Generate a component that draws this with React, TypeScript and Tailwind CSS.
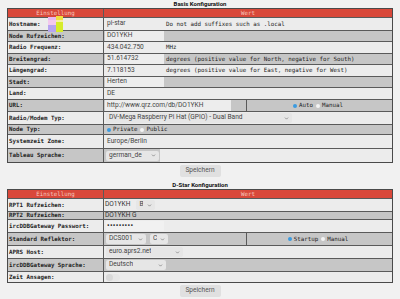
import { ChevronDown } from "lucide-react";

type Tone = "light" | "dark";

const mono = "font-['DejaVu_Sans_Mono',monospace]";
const sans = "font-['Roboto','Noto_Sans',sans-serif]";

function Row({
  label,
  tone,
  h,
  children,
}: {
  label: string;
  tone: Tone;
  h: string;
  children?: React.ReactNode;
}) {
  const bg = tone === "light" ? "bg-[#ececec]" : "bg-[#c6c6c6]";
  return (
    <div className={`flex border-t border-[#5a5a5a] ${bg} ${h}`}>
      <div className="flex w-[96px] shrink-0 items-center border-r border-[#5a5a5a] pl-[1px]">
        <span className={`${mono} text-[5.8px] font-bold text-[#1e1e1e]`}>{label}</span>
      </div>
      <div className="flex min-w-0 flex-1 items-center">{children}</div>
    </div>
  );
}

function Field({ value, w = "w-[59px]", dark }: { value: string; w?: string; dark?: boolean }) {
  return (
    <div
      className={`ml-[1px] flex h-full items-center pl-[2px] ${w} ${
        dark ? "bg-[#ededed]" : "bg-[#ececec]"
      } ${sans} text-[6.6px] text-[#444]`}
    >
      {value}
    </div>
  );
}

function Select({ value, w, ml = "ml-[2px]" }: { value: string; w: string; ml?: string }) {
  return (
    <div
      className={`${ml} flex h-[10px] items-center justify-between rounded-[2px] bg-[#e6e6e6] pl-[3px] pr-[3px] ${w} ${sans} text-[6.6px] text-[#444]`}
    >
      <span className="truncate">{value}</span>
      <ChevronDown size={5} strokeWidth={3} className="shrink-0 text-[#666]" />
    </div>
  );
}

function Note({ text }: { text: string }) {
  return (
    <span className={`ml-[2px] whitespace-nowrap ${mono} text-[5.8px] text-[#222]`}>{text}</span>
  );
}

function Radio({ label, on }: { label: string; on?: boolean }) {
  return (
    <span className="mr-[3px] inline-flex items-center">
      <span
        className={`mr-[2px] inline-block h-[4px] w-[4px] rounded-full ${
          on ? "bg-[#3b9be0]" : "bg-[#f4f4f4]"
        }`}
      />
      <span className={`${mono} text-[5.8px] text-[#222]`}>{label}</span>
    </span>
  );
}

function Header() {
  return (
    <div className={`flex h-[8px] bg-[#d9483a] ${mono} text-[5.8px] text-[#f6c9bf]`}>
      <div className="flex w-[96px] shrink-0 items-center justify-center border-r border-[#5a5a5a]">
        Einstellung
      </div>
      <div className="flex flex-1 items-center justify-center">Wert</div>
    </div>
  );
}

function Title({ text }: { text: string }) {
  return (
    <div className={`h-[8px] text-center ${sans} text-[6px] font-bold leading-[8px] text-[#111]`}>
      {text}
    </div>
  );
}

function SaveButton() {
  return (
    <div className="flex justify-center py-[2px]">
      <div
        className={`flex h-[12px] w-[41px] items-center justify-center rounded-[2px] bg-[#e0e0e0] ${sans} text-[6.6px] text-[#555]`}
      >
        Speichern
      </div>
    </div>
  );
}

export default function App() {
  return (
    <div className="relative h-[299px] w-[400px] overflow-hidden bg-[#f1f1f1] px-[7px]">
      <Title text="Basis Konfiguration" />
      <div className="border border-[#4a4a4a]">
        <Header />
        <Row label="Hostname:" tone="light" h="h-[13px]">
          <Field value="pi-star" />
          <Note text="Do not add suffixes such as .local" />
        </Row>
        <Row label="Node Rufzeichen:" tone="dark" h="h-[11px]">
          <Field value="DO1YKH" dark />
        </Row>
        <Row label="Radio Frequenz:" tone="light" h="h-[12px]">
          <Field value="434.042.750" />
          <Note text="MHz" />
        </Row>
        <Row label="Breitengrad:" tone="dark" h="h-[11px]">
          <Field value="51.614732" dark />
          <Note text="degrees (positive value for North, negative for South)" />
        </Row>
        <Row label="Längengrad:" tone="light" h="h-[12px]">
          <Field value="7.118153" />
          <Note text="degrees (positive value for East, negative for West)" />
        </Row>
        <Row label="Stadt:" tone="dark" h="h-[11px]">
          <Field value="Herten" dark />
        </Row>
        <Row label="Land:" tone="light" h="h-[12px]">
          <Field value="DE" />
        </Row>
        <Row label="URL:" tone="dark" h="h-[12px]">
          <div className="flex h-full w-[143px] shrink-0 items-center border-r border-[#5a5a5a]">
            <Field value="http://www.qrz.com/db/DO1YKH" w="w-[126px]" dark />
          </div>
          <div className="flex flex-1 items-center justify-center">
            <Radio label="Auto" on />
            <Radio label="Manual" />
          </div>
        </Row>
        <Row label="Radio/Modem Typ:" tone="light" h="h-[13px]">
          <Select value="DV-Mega Raspberry Pi Hat (GPIO) - Dual Band" w="w-[186px]" />
        </Row>
        <Row label="Node Typ:" tone="dark" h="h-[10px]">
          <span className="ml-[3px]" />
          <Radio label="Private" on />
          <Radio label="Public" />
        </Row>
        <Row label="Systemzeit Zone:" tone="light" h="h-[14px]">
          <div className={`ml-[3px] ${sans} text-[6.6px] text-[#444]`}>Europe/Berlin</div>
        </Row>
        <Row label="Tableau Sprache:" tone="dark" h="h-[14px]">
          <Select value="german_de" w="w-[53px]" />
          <div className="ml-[1px] h-full flex-1 bg-[#ececec]" />
        </Row>
      </div>
      <SaveButton />
      <div className="h-[2px]" />
      <Title text="D-Star Konfiguration" />
      <div className="border border-[#4a4a4a]">
        <Header />
        <Row label="RPT1 Rufzeichen:" tone="light" h="h-[13px]">
          <span className={`ml-[1px] ${sans} text-[6.6px] text-[#333]`}>DO1YKH</span>
          <Select value="B" w="w-[19px]" ml="ml-[6px]" />
        </Row>
        <Row label="RPT2 Rufzeichen:" tone="dark" h="h-[8px]">
          <span className={`ml-[1px] ${sans} text-[6.6px] text-[#333]`}>DO1YKH G</span>
        </Row>
        <Row label="ircDDBGateway Passwort:" tone="light" h="h-[13px]">
          <div className="ml-[2px] flex h-[10px] w-[58px] items-center bg-[#f1f1f1] pl-[1px] text-[7px] tracking-[0.3px] text-[#333]">
            •••••••••
          </div>
        </Row>
        <Row label="Standard Reflektor:" tone="dark" h="h-[13px]">
          <div className="flex h-full w-[143px] shrink-0 items-center border-r border-[#5a5a5a]">
            <Select value="DCS001" w="w-[40px]" />
            <Select value="C" w="w-[18px]" ml="ml-[4px]" />
          </div>
          <div className="flex flex-1 items-center justify-center">
            <Radio label="Startup" on />
            <Radio label="Manual" />
          </div>
        </Row>
        <Row label="APRS Host:" tone="light" h="h-[13px]">
          <Select value="euro.aprs2.net" w="w-[77px]" />
        </Row>
        <Row label="ircDDBGateway Sprache:" tone="dark" h="h-[13px]">
          <Select value="Deutsch" w="w-[60px]" />
        </Row>
        <Row label="Zeit Ansagen:" tone="light" h="h-[11px]">
          <div className="ml-[2px] flex h-[7px] w-[14px] items-center rounded-full bg-[#e6e6e6]">
            <div className="h-[7px] w-[7px] rounded-full bg-[#d8d8d8]" />
          </div>
        </Row>
      </div>
      <SaveButton />

      {/* rendering glitch over the hostname label */}
      <div className="absolute left-[48px] top-[17px] h-[3px] w-[8px] bg-[#e7b8f2]" />
      <div className="absolute left-[56px] top-[16px] h-[4px] w-[7px] bg-[#f0e040]" />
      <div className="absolute left-[48px] top-[20px] h-[5px] w-[8px] bg-[#f3c8ee]" />
      <div className="absolute left-[56px] top-[20px] h-[2px] w-[7px] bg-[#f5f0a0]" />
      <div className="absolute left-[56px] top-[22px] h-[10px] w-[7px] bg-[#d6ec2a]" />
      <div className="absolute left-[48px] top-[25px] h-[7px] w-[8px] bg-[#b7a4f0]" />
    </div>
  );
}
